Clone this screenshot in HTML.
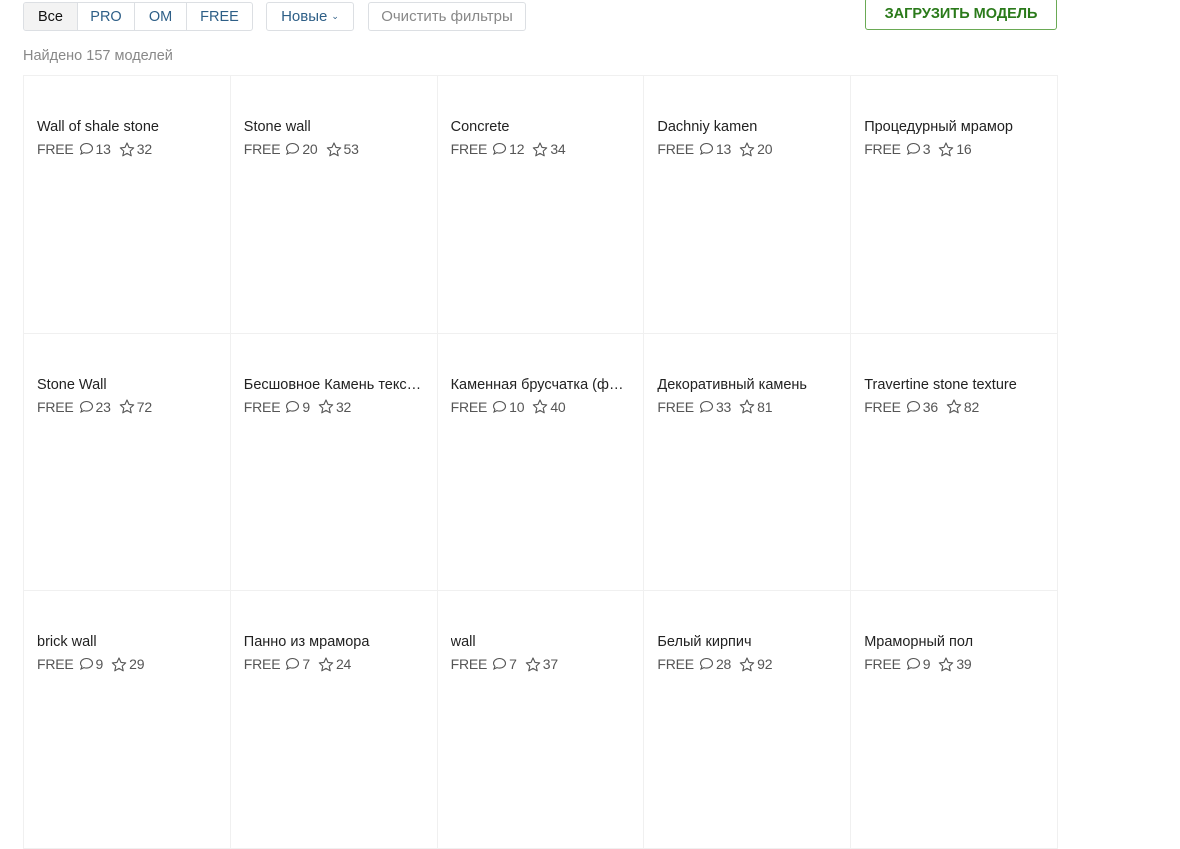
<!DOCTYPE html><html><head><meta charset="utf-8"><style>
body{margin:0;width:1180px;height:790px;overflow:hidden;background:#fff;font-family:"Liberation Sans",sans-serif;position:relative}
.b{position:absolute;box-sizing:border-box;border:1px solid #dcdfe3;border-radius:3px;font-size:15px;display:flex;align-items:center;justify-content:center}
.grp{position:absolute;left:23px;top:2px;height:29px;width:230px;border:1px solid #dcdfe3;border-radius:3px;box-sizing:border-box;display:flex;font-size:14.5px;overflow:hidden}
.grp div{display:flex;align-items:center;justify-content:center;border-left:1px solid #dcdfe3;color:#2e5f87}
.found{position:absolute;left:23px;top:48px;font-size:14.5px;color:#888}
.grid{position:absolute;left:23px;top:75px;width:1034px;border-top:1px solid #f0f0f0;border-left:1px solid #f0f0f0;display:grid;grid-template-columns:repeat(5,1fr);grid-auto-rows:257.5px}
.c{border-right:1px solid #f0f0f0;border-bottom:1px solid #f0f0f0;padding:43px 0 0 13px;overflow:hidden}
.t{font-size:14.5px;color:#222;white-space:nowrap;overflow:hidden;text-overflow:ellipsis;width:178px;height:18px}
.m{font-size:14px;color:#555;margin-top:4px;display:flex;align-items:center;letter-spacing:-0.2px}
.m svg{margin:0 2px 0 8px}
</style></head><body>
<div class="grp"><div style="width:53px;background:#f3f3f3;color:#111;border-left:0">Все</div><div style="width:56px">PRO</div><div style="width:51px">OM</div><div style="flex:1">FREE</div></div>
<div class="b" style="left:266px;top:2px;width:88px;height:29px;color:#2e5f87">Новые <span style="font-size:9px;margin-left:4px">&#8964;</span></div>
<div class="b" style="left:368px;top:2px;width:158px;height:29px;color:#888">Очистить фильтры</div>
<div class="b" style="left:865px;top:-2px;width:192px;height:32px;border-color:#6aaa55;color:#2a7a1a;font-weight:bold;font-size:14.5px">ЗАГРУЗИТЬ МОДЕЛЬ</div>
<div class="found">Найдено 157 моделей</div>
<div class="grid" id="g"></div>
<script>
var d=[["Wall of shale stone",13,32],["Stone wall",20,53],["Concrete",12,34],["Dachniy kamen",13,20],["Процедурный мрамор",3,16],["Stone Wall",23,72],["Бесшовное Камень текстура",9,32],["Каменная брусчатка (фото)",10,40],["Декоративный камень",33,81],["Travertine stone texture",36,82],["brick wall",9,29],["Панно из мрамора",7,24],["wall",7,37],["Белый кирпич",28,92],["Мраморный пол",9,39]];
var bub='<svg width="15" height="14" viewBox="0 0 15 14"><path d="M7.5 1.5c3.3 0 6 2.1 6 4.8s-2.7 4.8-6 4.8c-.9 0-1.8-.2-2.5-.5L2 12l.9-2.6C2 8.5 1.5 7.5 1.5 6.3 1.5 3.6 4.2 1.5 7.5 1.5z" fill="none" stroke="#555" stroke-width="1.1"/></svg>';
var st='<svg width="16" height="15" viewBox="0 0 16 15"><path d="M8 1l2 4.4 4.7.5-3.5 3.2 1 4.7L8 11.4 3.8 13.8l1-4.7L1.3 5.9 6 5.4z" fill="none" stroke="#555" stroke-width="1.1" stroke-linejoin="round"/></svg>';
var h='';d.forEach(function(x){h+='<div class="c"><div class="t">'+x[0]+'</div><div class="m">FREE '+bub.replace('<svg','<svg style="margin-left:5px"')+x[1]+st+x[2]+'</div></div>'});
document.getElementById('g').innerHTML=h;
</script>
</body></html>
